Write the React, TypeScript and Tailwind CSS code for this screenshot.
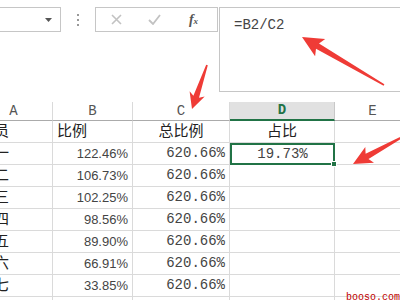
import React from "react";

const GRID_COLS = "grid grid-cols-[78px_80px_97px_105px_76px]";

const ROWS = [
  { a: "员工一", b: "122.46%", c: "620.66%", d: "19.73%" },
  { a: "员工二", b: "106.73%", c: "620.66%", d: "" },
  { a: "员工三", b: "102.25%", c: "620.66%", d: "" },
  { a: "员工四", b: "98.56%", c: "620.66%", d: "" },
  { a: "员工五", b: "89.90%", c: "620.66%", d: "" },
  { a: "员工六", b: "66.91%", c: "620.66%", d: "" },
  { a: "员工七", b: "33.85%", c: "620.66%", d: "" },
  { a: "", b: "", c: "", d: "" },
];

const ARROWS = [
  { from: [207, 65], to: [192, 109], head: 16, wing: 8 },
  { from: [384, 85], to: [302, 37], head: 21, wing: 10 },
  { from: [404, 136], to: [353, 164], head: 19, wing: 9 },
];

// tapered arrow: thin tail, wide head
function arrowPoints(from: number[], to: number[], head: number, wing: number) {
  const dx = to[0] - from[0];
  const dy = to[1] - from[1];
  const len = Math.hypot(dx, dy);
  const ux = dx / len;
  const uy = dy / len;
  const nx = -uy;
  const ny = ux;
  const bx = to[0] - ux * head;
  const by = to[1] - uy * head;
  const neck = 3;
  const tail = 0.8;
  const p = (x: number, y: number) => `${x.toFixed(1)},${y.toFixed(1)}`;
  return [
    p(from[0] + nx * tail, from[1] + ny * tail),
    p(bx + ux * 3 + nx * neck, by + uy * 3 + ny * neck),
    p(bx + nx * wing, by + ny * wing),
    p(to[0], to[1]),
    p(bx - nx * wing, by - ny * wing),
    p(bx + ux * 3 - nx * neck, by + uy * 3 - ny * neck),
    p(from[0] - nx * tail, from[1] - ny * tail),
  ].join(" ");
}

function ColHeader({ label, active }: { label: string; active?: boolean }) {
  return (
    <div
      className={
        active
          ? "h-[19px] flex items-center justify-center bg-[#e1e1e1] border-r border-[#c8c8c8] border-b-2 border-b-[#217346] text-[#217346] font-bold text-[14px]"
          : "h-[19px] flex items-center justify-center border-r border-[#dadada] border-b border-b-[#ababab] text-[#555] text-[14px]"
      }
    >
      {label}
    </div>
  );
}

const cell = "h-[22px] border-r border-b border-[#dadada] flex items-center overflow-hidden whitespace-nowrap";

export default function App() {
  return (
    <div className="relative w-[400px] h-[300px] overflow-hidden bg-white text-[#222] font-['Liberation_Sans','Noto_Sans_CJK_SC',sans-serif]">
      {/* formula bar */}
      <div className="flex items-start pt-[7px]">
        <div className="shrink-0 ml-[-20px] w-[81px] h-[25px] border border-[#c6c6c6] flex items-center justify-end pr-[8px]">
          <svg width="7" height="4" viewBox="0 0 7 4">
            <path d="M0 0 L7 0 L3.5 4 Z" fill="#555" />
          </svg>
        </div>
        <div className="shrink-0 w-[34px] h-[25px] flex flex-col items-center justify-center gap-[3px]">
          <span className="w-[2px] h-[2px] bg-[#999]" />
          <span className="w-[2px] h-[2px] bg-[#999]" />
          <span className="w-[2px] h-[2px] bg-[#999]" />
        </div>
        <div className="shrink-0 w-[123px] h-[25px] border border-[#c6c6c6] flex items-center">
          <div className="w-[40px] flex justify-center">
            <svg width="11" height="11" viewBox="0 0 11 11">
              <path d="M1 1 L10 10 M10 1 L1 10" stroke="#c2c2c2" strokeWidth="1.6" />
            </svg>
          </div>
          <div className="w-[36px] flex justify-center">
            <svg width="13" height="11" viewBox="0 0 13 11">
              <path d="M1 6 L5 10 L12 1" stroke="#c2c2c2" strokeWidth="1.8" fill="none" />
            </svg>
          </div>
          <div className="flex-1 flex justify-center pr-[2px] font-['Liberation_Serif',serif] italic font-bold text-[#555] text-[14px] leading-none">
            f<span className="text-[9px] mt-[4px]">x</span>
          </div>
        </div>
        <div className="shrink-0 ml-[1px] w-[200px] h-[85px] border border-[#c6c6c6] pl-[14px] pt-[7px] font-['Liberation_Mono',monospace] text-[14px] text-[#444]">
          =B2/C2
        </div>
      </div>

      {/* sheet */}
      <div className={`${GRID_COLS} ml-[-25px] mt-[10px] font-['Liberation_Mono',monospace]`}>
        <ColHeader label="A" />
        <ColHeader label="B" />
        <ColHeader label="C" />
        <ColHeader label="D" active />
        <ColHeader label="E" />
      </div>
      <div className={`${GRID_COLS} ml-[-25px]`}>
        <div className={`${cell} justify-end pr-[43px] text-[15px]`}>人员</div>
        <div className={`${cell} pl-[4px] text-[15px]`}>比例</div>
        <div className={`${cell} justify-center text-[15px]`}>总比例</div>
        <div className={`${cell} justify-center text-[15px]`}>占比</div>
        <div className={cell} />
        {ROWS.map((r, i) => (
          <React.Fragment key={i}>
            <div className={`${cell} justify-end pr-[43px] text-[15px]`}>{r.a}</div>
            <div className={`${cell} justify-end pr-[4px] text-[13px] text-[#444]`}>{r.b}</div>
            <div className={`${cell} justify-end pr-[4px] text-[14px] text-[#444] font-['Liberation_Mono',monospace]`}>
              {r.c}
            </div>
            <div
              className={
                i === 0
                  ? "relative h-[22px] border-2 border-[#217346] flex items-center justify-center text-[14px] text-[#444] font-['Liberation_Mono',monospace]"
                  : `${cell}`
              }
            >
              {r.d}
              {i === 0 && (
                <span className="absolute right-[-4px] bottom-[-4px] w-[6px] h-[6px] bg-[#217346] border border-white" />
              )}
            </div>
            <div className={cell} />
          </React.Fragment>
        ))}
      </div>

      {/* annotation arrows */}
      <svg className="absolute inset-0 pointer-events-none" width="400" height="300">
        {ARROWS.map((a, i) => (
          <polygon key={i} points={arrowPoints(a.from, a.to, a.head, a.wing)} fill="#ef3b36" />
        ))}
      </svg>

      <div className="absolute left-[346px] top-[290px] font-['Liberation_Mono',monospace] text-[10px] text-[#c00000]">
        booso.com
      </div>
    </div>
  );
}
